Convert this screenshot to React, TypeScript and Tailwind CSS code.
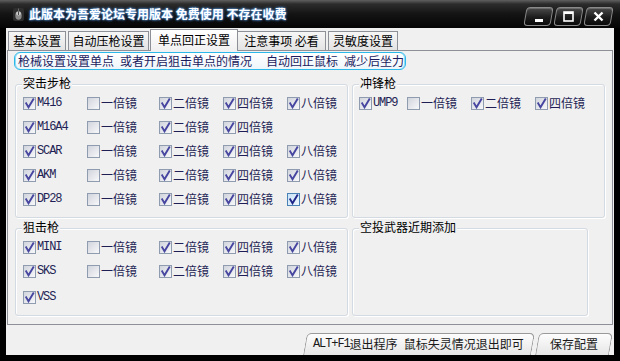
import React from "react";

type Cell = null | { t: string; c: boolean; m?: boolean; hot?: boolean };

function Check({ checked, hot }: { checked: boolean; hot?: boolean }) {
  return (
    <span
      className={
        "flex h-[13px] w-[13px] shrink-0 items-center justify-center border " +
        (hot
          ? "border-[#4a82b6] bg-[linear-gradient(135deg,#c9e3f8,#eef7fe)]"
          : "border-[#8f9cb0] bg-[linear-gradient(135deg,#d0d4dc,#f8f8fa)]")
      }
    >
      {checked && (
        <svg width="11" height="11" viewBox="0 0 11 11">
          <path
            d="M2.2 5.4 L4.5 9.3 L9.3 1.3"
            fill="none"
            stroke={hot ? "#20288a" : "#4646a0"}
            strokeWidth="1.9"
            strokeLinecap="square"
            strokeLinejoin="miter"
          />
        </svg>
      )}
    </span>
  );
}

function Item({ cell }: { cell: Cell }) {
  if (!cell) return <div />;
  return (
    <div className="flex items-center">
      <Check checked={cell.c} hot={cell.hot} />
      <span
        className={
          "ml-[1px] whitespace-nowrap text-[#1f1f55] " +
          (cell.m
            ? "font-['Liberation_Mono',monospace] text-[12px] tracking-[-1.1px]"
            : "font-['Noto_Sans_CJK_SC',sans-serif] text-[12px]")
        }
      >
        {cell.t}
      </span>
    </div>
  );
}

function Group({
  title,
  className,
  children,
}: {
  title: string;
  className: string;
  children?: React.ReactNode;
}) {
  return (
    <div
      className={
        "relative shrink-0 rounded-[3px] border border-[#d3dae1] shadow-[inset_1px_1px_0_#ffffff,1px_1px_0_#ffffff] " +
        className
      }
    >
      <span className="absolute -top-[9px] left-[6px] bg-[#f0f0f0] px-[1px] text-[12px] leading-[14px] text-black">
        {title}
      </span>
      {children}
    </div>
  );
}

const g = (t: string, c: boolean, hot?: boolean): Cell => ({ t, c, m: true, hot });
const s = (t: string, c: boolean, hot?: boolean): Cell => ({ t, c, hot });

const rifleRows: Cell[][] = [
  [g("M416", true), s("一倍镜", false), s("二倍镜", true), s("四倍镜", true), s("八倍镜", true)],
  [g("M16A4", true), s("一倍镜", false), s("二倍镜", true), s("四倍镜", true), null],
  [g("SCAR", true), s("一倍镜", false), s("二倍镜", true), s("四倍镜", true), s("八倍镜", true)],
  [g("AKM", true), s("一倍镜", false), s("二倍镜", true), s("四倍镜", true), s("八倍镜", true)],
  [g("DP28", true), s("一倍镜", false), s("二倍镜", true), s("四倍镜", true), s("八倍镜", true, true)],
];

const smgRow: Cell[] = [g("UMP9", true), s("一倍镜", false), s("二倍镜", true), s("四倍镜", true)];

const sniperRows: Cell[][] = [
  [g("MINI", true), s("一倍镜", false), s("二倍镜", true), s("四倍镜", true), s("八倍镜", true)],
  [g("SKS", true), s("一倍镜", false), s("二倍镜", true), s("四倍镜", true), s("八倍镜", true)],
];

function WinBtn({ children }: { children: React.ReactNode }) {
  return (
    <div className="relative flex h-[19px] w-[27px] items-center justify-center">
      <span className="absolute inset-0 -skew-x-[10deg] rounded-[4px] border border-[#8a8a8a] bg-[linear-gradient(to_bottom,#4a4a4a,#1c1c1c_55%,#0a0a0a)] shadow-[inset_0_1px_0_#6a6a6a]" />
      <span className="relative flex">{children}</span>
    </div>
  );
}

export default function App() {
  return (
    <div className="flex h-[361px] w-[620px] flex-col overflow-hidden bg-black font-['Noto_Sans_CJK_SC',sans-serif]">
      {/* Title bar */}
      <div className="flex h-[28px] shrink-0 items-center bg-[linear-gradient(to_bottom,#606060_0px,#2c2c2c_4px,#141414_14px,#050505_28px)]">
        <div className="ml-[13px] flex h-[13px] w-[11px]">
          <svg width="11" height="13" viewBox="0 0 11 13">
            <rect x="0" y="0" width="11" height="13" rx="2" fill="#2e2e2e" />
            <ellipse cx="5.5" cy="7.5" rx="3.2" ry="4.3" fill="#8c8c8c" />
            <ellipse cx="5.5" cy="5.5" rx="2.4" ry="2" fill="#c8c8c8" />
            <line x1="5.5" y1="3.3" x2="5.5" y2="7" stroke="#3a3a3a" strokeWidth="0.9" />
            <line x1="5.5" y1="0.5" x2="5.5" y2="3.3" stroke="#777" strokeWidth="0.8" />
          </svg>
        </div>
        <span className="ml-[5px] whitespace-nowrap text-[12px] font-bold leading-none text-white [text-shadow:0_0_2px_#6fb6ff,0_0_3px_#3d7fd0]">
          此版本为吾爱论坛专用版本 免费使用 不存在收费
        </span>
        <div className="ml-auto mr-[8px] mt-[5px] flex gap-[3px]">
          <WinBtn>
            <svg width="10" height="10" viewBox="0 0 10 10">
              <rect x="1" y="7" width="8" height="3" fill="#fff" />
            </svg>
          </WinBtn>
          <WinBtn>
            <svg width="11" height="11" viewBox="0 0 11 11">
              <rect x="1" y="1" width="9" height="9" fill="none" stroke="#fff" strokeWidth="1.6" />
              <rect x="1" y="1" width="9" height="2" fill="#fff" />
            </svg>
          </WinBtn>
          <WinBtn>
            <svg width="11" height="11" viewBox="0 0 11 11">
              <path d="M1.5 1.5 L9.5 9.5 M9.5 1.5 L1.5 9.5" stroke="#fff" strokeWidth="2.4" />
            </svg>
          </WinBtn>
        </div>
      </div>

      {/* Client */}
      <div className="ml-[6px] mr-[6px] flex h-[327px] shrink-0 flex-col bg-[#f0f0f0]">
        {/* Tabs */}
        <div className="flex h-[22px] shrink-0 items-end pl-[2px] text-[12px] text-black">
          <div className="flex h-[19px] w-[58px] items-center justify-center border border-b-0 border-[#8d9096] bg-[linear-gradient(to_bottom,#f6f6f6,#e3e3e3)]">
            基本设置
          </div>
          <div className="ml-[2px] flex h-[19px] w-[81px] items-center justify-center border border-b-0 border-[#8d9096] bg-[linear-gradient(to_bottom,#f6f6f6,#e3e3e3)]">
            自动压枪设置
          </div>
          <div className="relative z-10 -mb-[1px] ml-[1px] flex h-[22px] w-[88px] items-center justify-center border border-b-0 border-[#8d9096] bg-[linear-gradient(to_bottom,#ffffff,#f0f0f0)] pb-[1px]">
            单点回正设置
          </div>
          <div className="flex h-[19px] w-[88px] items-center justify-center border border-b-0 border-l-0 border-[#8d9096] bg-[linear-gradient(to_bottom,#f6f6f6,#e3e3e3)]">
            注意事项&nbsp;必看
          </div>
          <div className="ml-[2px] flex h-[19px] w-[70px] items-center justify-center border border-b-0 border-[#8d9096] bg-[linear-gradient(to_bottom,#f6f6f6,#e3e3e3)]">
            灵敏度设置
          </div>
        </div>

        {/* Panel */}
        <div className="mx-[1px] flex h-[275px] shrink-0 flex-col border border-[#8d9096] bg-[#f0f0f0]">
          <div className="ml-[6px] mt-[1px] flex h-[18px] w-[392px] items-center rounded-[6px] border border-[#2db8ea] bg-[linear-gradient(to_bottom,#ffffff,#eef6fb)] pl-[3px] text-[12px] leading-none text-[#1b1b5e] shadow-[inset_1px_0_0_#8fdcf6,inset_-1px_0_0_#8fdcf6]">
            <span>枪械设置设置单点</span>
            <span className="ml-[6px]">或者开启狙击单点的情况</span>
            <span className="ml-[14px]">自动回正鼠标</span>
            <span className="ml-[6px]">减少后坐力</span>
          </div>

          <div className="ml-[7px] mt-[14px] flex gap-[4px]">
            <Group title="突击步枪" className="h-[134px] w-[333px]">
              <div className="grid auto-rows-[24px] grid-cols-[64px_72px_64px_64px_64px] items-center pl-[7px] pt-[6px]">
                {rifleRows.flat().map((c, i) => (
                  <Item key={i} cell={c} />
                ))}
              </div>
            </Group>
            <Group title="冲锋枪" className="h-[134px] w-[253px]">
              <div className="grid auto-rows-[24px] grid-cols-[48px_64px_64px_64px] items-center pl-[6px] pt-[6px]">
                {smgRow.map((c, i) => (
                  <Item key={i} cell={c} />
                ))}
              </div>
            </Group>
          </div>

          <div className="ml-[7px] mt-[10px] flex gap-[4px]">
            <Group title="狙击枪" className="h-[88px] w-[333px]">
              <div className="grid auto-rows-[24px] grid-cols-[64px_72px_64px_64px_64px] items-center pl-[7px] pt-[6px]">
                {sniperRows.flat().map((c, i) => (
                  <Item key={i} cell={c} />
                ))}
              </div>
              <div className="mt-[2px] flex h-[24px] items-center pl-[7px]">
                <Item cell={g("VSS", true)} />
              </div>
            </Group>
            <Group title="空投武器近期添加" className="h-[88px] w-[236px]" />
          </div>
        </div>

        {/* Bottom buttons */}
        <div className="flex flex-1 items-start justify-end gap-[4px] pr-[3px] pt-[8px] text-[12px] text-[#1a1a1a]">
          <div className="relative flex h-[22px] w-[228px] items-center pl-[8px]">
            <span className="absolute inset-0 -skew-x-[10deg] rounded-t-[5px] border border-b-0 border-[#9a9a9a] bg-[linear-gradient(to_bottom,#fdfdfd,#e6e6e6)]" />
            <span className="relative flex items-center whitespace-nowrap">
              <span className="font-['Liberation_Mono',monospace] text-[12px] tracking-[-1.1px]">ALT+F1</span>
              <span>退出程序</span>
              <span className="ml-[6px]">鼠标失灵情况退出即可</span>
            </span>
          </div>
          <div className="relative flex h-[22px] w-[74px] items-center justify-center">
            <span className="absolute inset-0 -skew-x-[10deg] rounded-t-[5px] border border-b-0 border-[#9a9a9a] bg-[linear-gradient(to_bottom,#fdfdfd,#e6e6e6)]" />
            <span className="relative">保存配置</span>
          </div>
        </div>
      </div>
    </div>
  );
}
